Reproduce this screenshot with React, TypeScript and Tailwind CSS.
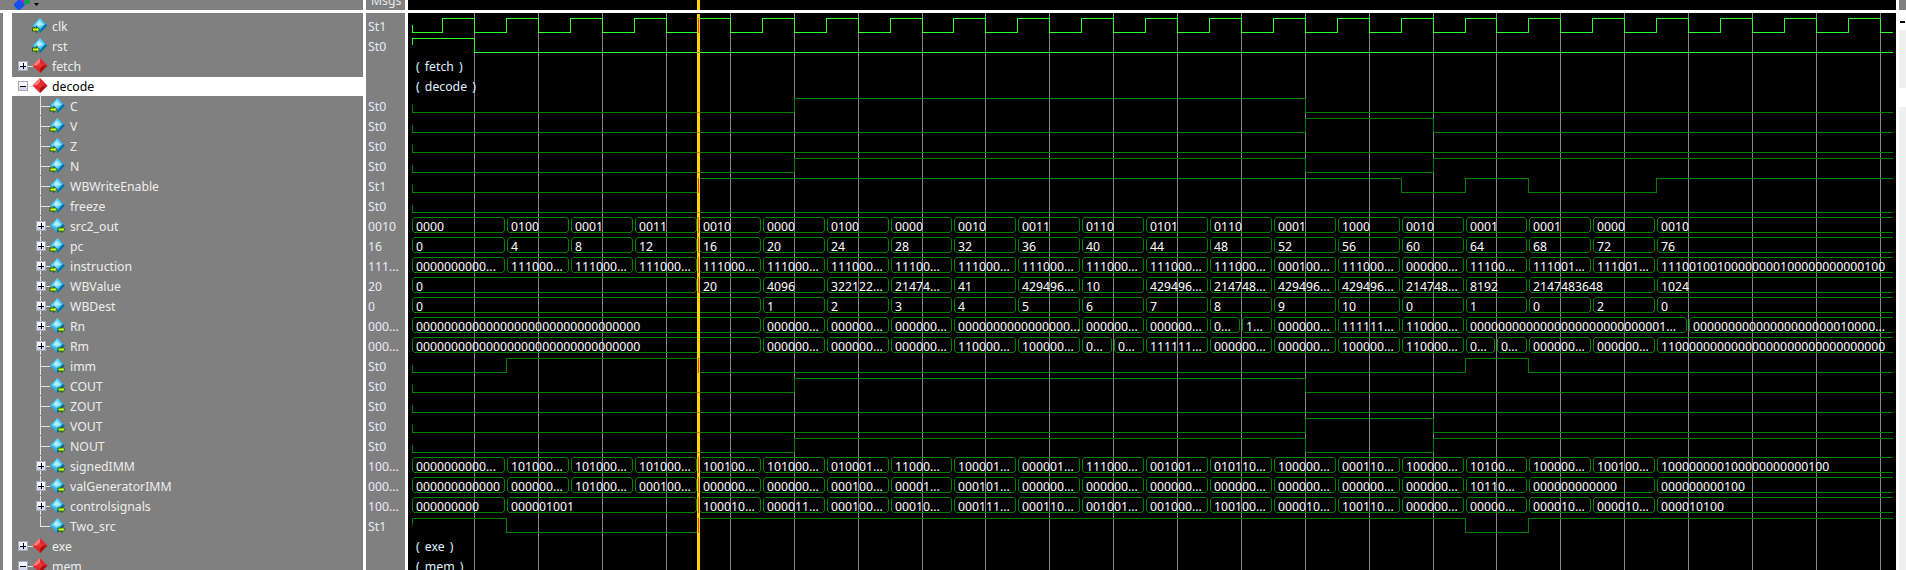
import React from "react";

const R = [442,506,570,634,698,762,826,890,953,1017,1081,1145,1209,1273,1337,1401,1465,1528,1592,1656,1720,1784,1848];
const G = [474,538,602,666,730,794,858,922,985,1049,1113,1177,1241,1305,1369,1433,1496,1560,1624,1688,1752,1816,1880];
const CLK = [...R, ...G].sort((a, b) => a - b);
const END = 1893;
const L = "000000...";
const Z32 = "00000000000000000000000000000000";

type Bit = { row: number; start: number; t: number[]; bright?: boolean };
const bits: Bit[] = [
  { row: 0, start: 0, t: CLK, bright: true },
  { row: 1, start: 1, t: [474], bright: true },
  { row: 4, start: 0, t: [794, 1305] },
  { row: 5, start: 0, t: [1305, 1433] },
  { row: 6, start: 0, t: [] },
  { row: 7, start: 0, t: [794, 1305, 1433] },
  { row: 8, start: 0, t: [698, 1401, 1465, 1528, 1656] },
  { row: 9, start: 0, t: [] },
  { row: 17, start: 0, t: [506, 698, 1465, 1528] },
  { row: 18, start: 0, t: [794, 1305] },
  { row: 19, start: 0, t: [] },
  { row: 20, start: 0, t: [1305, 1433] },
  { row: 21, start: 0, t: [794, 1305, 1433] },
  { row: 25, start: 1, t: [506, 698, 1465, 1528] },
];

const seq = (labels: string[], from = 0): [number, string][] => {
  const xs = [411, ...R.slice(1)];
  return labels.map((s, i) => [xs[i + from], s]);
};

const buses: { row: number; cells: [number, string][] }[] = [
  { row: 10, cells: seq(["0000","0100","0001","0011","0010","0000","0100","0000","0010","0011","0110","0101","0110","0001","1000","0010","0001","0001","0000","0010"]) },
  { row: 11, cells: seq(["0","4","8","12","16","20","24","28","32","36","40","44","48","52","56","60","64","68","72","76"]) },
  { row: 12, cells: seq(["0000000000...","111000...","111000...","111000...","111000...","111000...","111000...","11100...","111000...","111000...","111000...","111000...","111000...","000100...","111000...",L,"11100...","111001...","111001...","11100100100000000100000000000100"]) },
  { row: 13, cells: [[411,"0"],[698,"20"],[762,"4096"],[826,"322122..."],[890,"21474..."],[953,"41"],[1017,"429496..."],[1081,"10"],[1145,"429496..."],[1209,"214748..."],[1273,"429496..."],[1337,"429496..."],[1401,"214748..."],[1465,"8192"],[1528,"2147483648"],[1656,"1024"]] },
  { row: 14, cells: [[411,"0"],[762,"1"],[826,"2"],[890,"3"],[953,"4"],[1017,"5"],[1081,"6"],[1145,"7"],[1209,"8"],[1273,"9"],[1337,"10"],[1401,"0"],[1465,"1"],[1528,"0"],[1592,"2"],[1656,"0"]] },
  { row: 15, cells: [[411,Z32],[762,L],[826,L],[890,L],[953,"0000000000000000..."],[1081,L],[1145,L],[1209,"0..."],[1241,"1..."],[1273,L],[1337,"111111..."],[1401,"110000..."],[1465,"0000000000000000000000000001..."],[1688,"00000000000000000000010000..."]] },
  { row: 16, cells: [[411,Z32],[762,L],[826,L],[890,L],[953,"110000..."],[1017,"100000..."],[1081,"0..."],[1113,"0..."],[1145,"111111..."],[1209,L],[1273,L],[1337,"100000..."],[1401,"110000..."],[1465,"0..."],[1496,"0..."],[1528,L],[1592,L],[1656,"11000000000000000000000000000000"]] },
  { row: 22, cells: seq(["0000000000...","101000...","101000...","101000...","100100...","101000...","010001...","11000...","100001...","000001...","111000...","001001...","010110...","100000...","000110...","100000...","10100...","100000...","100100...","100000000100000000000100"]) },
  { row: 23, cells: [[411,"000000000000"],[506,L],[570,"101000..."],[634,"000100..."],[698,L],[762,L],[826,"000100..."],[890,"00001..."],[953,"000101..."],[1017,L],[1081,L],[1145,L],[1209,L],[1273,L],[1337,L],[1401,L],[1465,"10110..."],[1528,"000000000000"],[1656,"000000000100"]] },
  { row: 24, cells: [[411,"000000000"],[506,"000001001"],[698,"100010..."],[762,"000011..."],[826,"000100..."],[890,"00010..."],[953,"000111..."],[1017,"000110..."],[1081,"001001..."],[1145,"001000..."],[1209,"100100..."],[1273,"000010..."],[1337,"100110..."],[1401,L],[1465,"00000..."],[1528,"000010..."],[1592,"000010..."],[1656,"000010100"]] },
];

const groups: [number, string][] = [[2, "( fetch )"], [3, "( decode )"], [26, "( exe )"], [27, "( mem )"]];

type Sig = { name: string; msg: string; kind: "top" | "group" | "child"; box?: "+" | "-"; out?: boolean; last?: boolean; selected?: boolean };
const signals: Sig[] = [
  { name: "clk", msg: "St1", kind: "top" },
  { name: "rst", msg: "St0", kind: "top" },
  { name: "fetch", msg: "", kind: "group", box: "+" },
  { name: "decode", msg: "", kind: "group", box: "-", selected: true },
  { name: "C", msg: "St0", kind: "child" },
  { name: "V", msg: "St0", kind: "child" },
  { name: "Z", msg: "St0", kind: "child" },
  { name: "N", msg: "St0", kind: "child" },
  { name: "WBWriteEnable", msg: "St1", kind: "child" },
  { name: "freeze", msg: "St0", kind: "child" },
  { name: "src2_out", msg: "0010", kind: "child", box: "+", out: true },
  { name: "pc", msg: "16", kind: "child", box: "+" },
  { name: "instruction", msg: "111...", kind: "child", box: "+" },
  { name: "WBValue", msg: "20", kind: "child", box: "+" },
  { name: "WBDest", msg: "0", kind: "child", box: "+" },
  { name: "Rn", msg: "000...", kind: "child", box: "+", out: true },
  { name: "Rm", msg: "000...", kind: "child", box: "+", out: true },
  { name: "imm", msg: "St0", kind: "child", out: true },
  { name: "COUT", msg: "St0", kind: "child", out: true },
  { name: "ZOUT", msg: "St0", kind: "child", out: true },
  { name: "VOUT", msg: "St0", kind: "child", out: true },
  { name: "NOUT", msg: "St0", kind: "child", out: true },
  { name: "signedIMM", msg: "100...", kind: "child", box: "+", out: true },
  { name: "valGeneratorIMM", msg: "000...", kind: "child", box: "+", out: true },
  { name: "controlsignals", msg: "100...", kind: "child", box: "+", out: true },
  { name: "Two_src", msg: "St1", kind: "child", out: true, last: true },
  { name: "exe", msg: "", kind: "group", box: "+" },
  { name: "mem", msg: "", kind: "group", box: "-" },
];

function Box({ cx, sign }: { cx: number; sign: "+" | "-" }) {
  const x = cx - 4.5;
  return (
    <g shapeRendering="crispEdges">
      <rect x={x} y={5.5} width={9} height={9} fill="#f4f6ff" stroke="#a8a8b8" />
      <rect x={x + 1} y={11} width={8} height={3} fill="#d4d8ee" />
      <rect x={cx - 2.5} y={9.5} width={6} height={1} fill="#000" />
      {sign === "+" && <rect x={cx} y={7} width={1} height={6} fill="#000" />}
    </g>
  );
}

function SignalIcon({ cx, out }: { cx: number; out?: boolean }) {
  const cy = 9.5;
  return (
    <g>
      <polygon points={`${cx},${cy - 7.5} ${cx + 7.5},${cy} ${cx},${cy + 7.5} ${cx - 7.5},${cy}`} fill="#22b4ec" />
      <polygon points={`${cx},${cy - 7.5} ${cx + 5},${cy - 1} ${cx},${cy + 3} ${cx - 6.5},${cy}`} fill="#5cd2fa" />
      <polygon points={`${cx - 1},${cy - 5} ${cx + 3},${cy - 1} ${cx - 1},${cy + 1} ${cx - 4},${cy - 1}`} fill="#b4ecfd" />
      <polygon points={`${cx + 7.5},${cy} ${cx},${cy + 7.5} ${cx - 1},${cy + 6} ${cx + 5.5},${cy - 1.5}`} fill="#0e6a9c" />
      {out ? (
        <g>
          <polygon points={`${cx},${cy + 2} ${cx + 4},${cy + 2} ${cx + 4},${cy} ${cx + 8},${cy + 4} ${cx + 4},${cy + 8} ${cx + 4},${cy + 6} ${cx},${cy + 6}`} fill="#2a5a10" />
          <polygon points={`${cx + 1},${cy + 3} ${cx + 5},${cy + 3} ${cx + 5},${cy + 2} ${cx + 7},${cy + 4} ${cx + 5},${cy + 6} ${cx + 5},${cy + 5} ${cx + 1},${cy + 5}`} fill="#bcfc20" />
        </g>
      ) : (
        <g>
          <polygon points={`${cx - 8},${cy + 2} ${cx - 4},${cy + 2} ${cx - 4},${cy} ${cx},${cy + 4} ${cx - 4},${cy + 8} ${cx - 4},${cy + 6} ${cx - 8},${cy + 6}`} fill="#2a5a10" />
          <polygon points={`${cx - 7},${cy + 3} ${cx - 3},${cy + 3} ${cx - 3},${cy + 2} ${cx - 1},${cy + 4} ${cx - 3},${cy + 6} ${cx - 3},${cy + 5} ${cx - 7},${cy + 5}`} fill="#d4ff10" />
        </g>
      )}
    </g>
  );
}

function GroupIcon({ cx }: { cx: number }) {
  const cy = 9.5;
  return (
    <g>
      <polygon points={`${cx},${cy - 7.5} ${cx + 7.5},${cy} ${cx},${cy + 7.5} ${cx - 7.5},${cy}`} fill="#e02828" />
      <polygon points={`${cx},${cy - 7.5} ${cx - 7.5},${cy} ${cx - 3},${cy} ${cx},${cy - 3}`} fill="#ff7a7a" />
      <polygon points={`${cx},${cy + 7.5} ${cx + 7.5},${cy} ${cx + 3},${cy} ${cx},${cy + 3}`} fill="#a81010" />
      <polygon points={`${cx},${cy - 3} ${cx + 3},${cy} ${cx},${cy + 3} ${cx - 3},${cy}`} fill="#f03030" />
    </g>
  );
}

function Glyph({ s }: { s: Sig }) {
  const line = "#e4e4e4";
  if (s.kind === "child") {
    return (
      <svg viewBox="12 0 58 20" className="h-5 w-[58px] shrink-0">
        <g shapeRendering="crispEdges">
          <rect x={40} y={0} width={1} height={s.last ? 11 : 19} fill={line} />
          <rect x={40} y={10} width={10} height={1} fill={line} />
        </g>
        {s.box && <Box cx={40.5} sign={s.box} />}
        <SignalIcon cx={57.5} out={s.out} />
      </svg>
    );
  }
  return (
    <svg viewBox="12 0 40 20" className="h-5 w-10 shrink-0">
      {s.box && (
        <>
          <rect x={26} y={10} width={7} height={1} fill={line} shapeRendering="crispEdges" />
          <Box cx={22.5} sign={s.box} />
        </>
      )}
      {s.kind === "group" ? <GroupIcon cx={40} /> : <SignalIcon cx={40} />}
    </svg>
  );
}

function busPath(a: number, b: number, row: number, open: boolean) {
  const top = 17 + 20 * row + 0.5;
  const bot = 32 + 20 * row + 0.5;
  const l = a + 1.5;
  const r = b - 1.5;
  if (open) return `M${END} ${top}H${l + 2}L${l} ${top + 2}V${bot - 2}L${l + 2} ${bot}H${END}`;
  return `M${r - 2} ${top}H${l + 2}L${l} ${top + 2}V${bot - 2}L${l + 2} ${bot}H${r - 2}L${r} ${bot - 2}V${top + 2}Z`;
}

function bitPath(b: Bit) {
  const hi = 18 + 20 * b.row + 0.5;
  const lo = 32 + 20 * b.row + 0.5;
  let lev = b.start;
  let d = `M412.5 ${25 + 20 * b.row}V${lev ? hi : lo}`;
  for (const x of b.t) {
    d += `H${x + 0.5}`;
    lev = 1 - lev;
    d += `V${lev ? hi : lo}`;
  }
  return d + `H${END}`;
}

function Wave() {
  return (
    <svg viewBox="408 13 1488 557" className="block h-[557px] w-[1488px] font-['Noto_Sans',sans-serif] text-[12.25px]">
      <g shapeRendering="crispEdges">
        {G.map((x) => (
          <rect key={x} x={x} y={13} width={1} height={557} fill="#858585" />
        ))}
        {bits.map((b) => (
          <path key={b.row} d={bitPath(b)} fill="none" stroke={b.bright ? "#2cff2c" : "#008000"} strokeWidth={1} />
        ))}
        {buses.map((bus) =>
          bus.cells.map(([a], i) => (
            <path
              key={bus.row + "-" + i}
              d={busPath(a, i + 1 < bus.cells.length ? bus.cells[i + 1][0] : END, bus.row, i + 1 === bus.cells.length)}
              fill="none"
              stroke="#008000"
              strokeWidth={1}
            />
          ))
        )}
      </g>
      {buses.map((bus) =>
        bus.cells.map(([a, t], i) => (
          <text key={bus.row + "t" + i} x={a + 5} y={31 + 20 * bus.row} fill="#ffffff">
            {t}
          </text>
        ))
      )}
      {groups.map(([row, t]) => (
        <text key={row} x={416} y={31 + 20 * row} fill="#dff2ff" className="[word-spacing:2px]">
          {t}
        </text>
      ))}
      <g shapeRendering="crispEdges">
        <rect x={697} y={14} width={3} height={556} fill="#ffd400" />
        {bits.map((b) => {
          const crossing = b.t.filter((x) => x < 698).length % 2 === 0 ? b.start : 1 - b.start;
          const changes = b.t.includes(698);
          return (
            <g key={b.row}>
              {changes ? (
                <rect x={698} y={18 + 20 * b.row} width={1} height={15} fill="#f04020" />
              ) : (
                <rect x={697} y={(crossing ? 18 : 32) + 20 * b.row} width={3} height={1} fill="#f07020" />
              )}
            </g>
          );
        })}
        {buses
          .filter((bus) => bus.cells.some(([a]) => a === 698))
          .map((bus) => (
            <rect key={bus.row} x={698} y={17 + 20 * bus.row} width={1} height={16} fill="#f04020" />
          ))}
      </g>
    </svg>
  );
}

export default function App() {
  return (
    <div className="flex h-[570px] w-[1906px] flex-col overflow-hidden bg-white font-['Noto_Sans',sans-serif] text-[12.25px]">
      <div className="flex h-[10px] shrink-0 overflow-hidden">
        <div className="flex w-[363px] bg-[#808080] pl-[14px]">
          <svg viewBox="0 0 26 10" className="h-[10px] w-[26px]">
            <rect x={4} y={-2} width={7} height={6} fill="#b020c0" />
            <rect x={10} y={-3} width={6} height={7} fill="#10a050" />
            <polygon points="5,-1 11,5 5,11 -1,5" fill="#1050f0" />
            <polygon points="20,3 25,3 22.5,6" fill="#000" />
          </svg>
        </div>
        <div className="w-[3px] bg-white" />
        <div className="w-[39px] bg-[#808080] pl-[5px] leading-[14px] text-[#e8e8e8]">
          <span className="block -mt-[6px]">Msgs</span>
        </div>
        <div className="w-[3px] bg-white" />
        <div className="w-[289px] bg-black" />
        <div className="w-[3px] bg-[#ffd400]" />
        <div className="w-[1196px] bg-black" />
        <div className="w-[3px] bg-white" />
        <div className="flex-1 bg-[#808080]" />
      </div>
      <div className="h-[3px] shrink-0 bg-white" />
      <div className="flex min-h-0 flex-1">
        <div className="flex w-[12px] shrink-0">
          <div className="w-[3px] bg-[#808080]" />
          <div className="flex-1 bg-white" />
        </div>
        <div className="w-[351px] shrink-0 bg-[#808080] pt-[3px]">
          {signals.map((s) => (
            <div key={s.name} className={`flex h-5 items-center ${s.selected ? "text-black" : "text-[#eeeeee]"}`}>
              <div className={`flex w-full items-center ${s.selected ? "h-[19px] bg-white" : "h-5"}`}>
                <Glyph s={s} />
                <span className="mt-[2px] whitespace-nowrap">{s.name}</span>
              </div>
            </div>
          ))}
        </div>
        <div className="w-[3px] shrink-0 bg-white" />
        <div className="w-[39px] shrink-0 bg-[#808080] pt-[3px] pl-[2px] text-[#eaeaf6]">
          {signals.map((s) => (
            <div key={s.name} className="flex h-5 items-center whitespace-nowrap">
              <span className="mt-[2px]">{s.msg}</span>
            </div>
          ))}
        </div>
        <div className="w-[3px] shrink-0 bg-white" />
        <div className="w-[1488px] shrink-0 bg-black">
          <Wave />
        </div>
        <div className="w-[3px] shrink-0 bg-white" />
        <div className="flex flex-1 flex-col bg-[#f0f0f0]">
          <div className="flex h-[17px] shrink-0 items-center justify-center bg-white">
            <div className="h-[2px] w-[5px] bg-black" />
          </div>
          <div className="h-[58px] shrink-0" />
          <div className="h-[19px] shrink-0 bg-white" />
        </div>
      </div>
    </div>
  );
}
